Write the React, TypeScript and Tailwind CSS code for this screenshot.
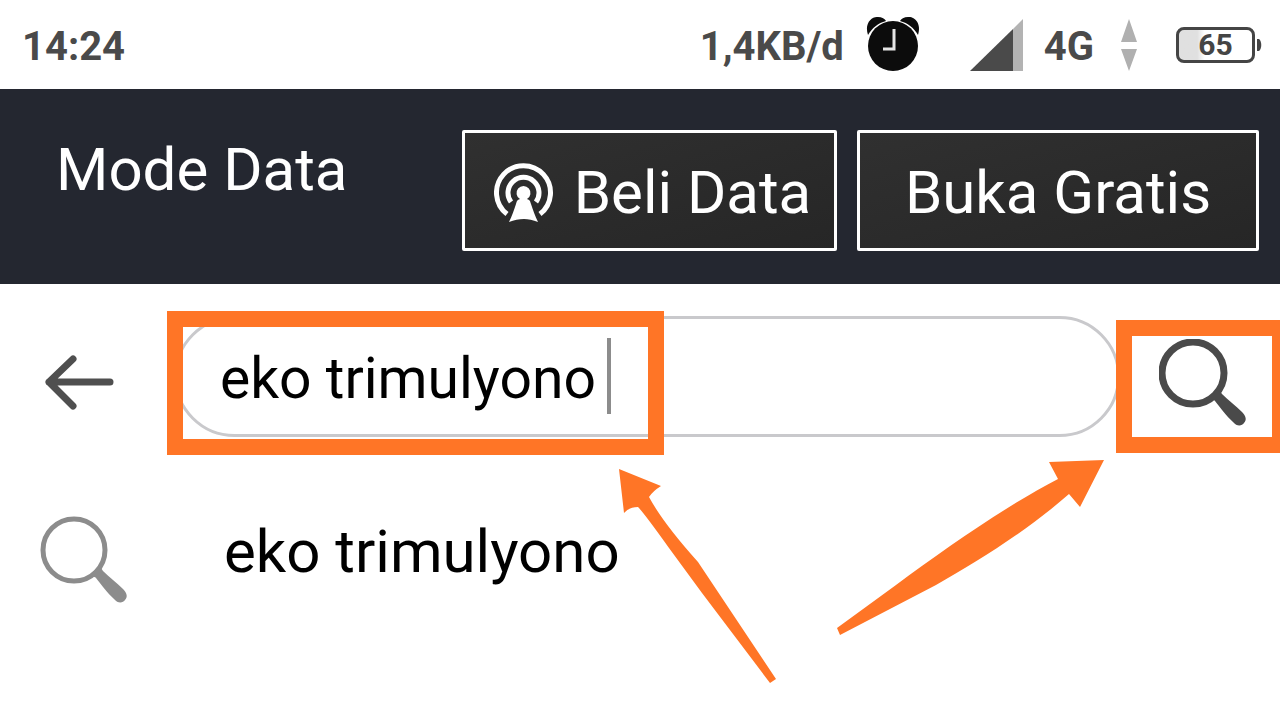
import React, { useState } from 'react';

interface SearchIconProps {
  strokeWidth: number;
  className?: string;
}

const SearchIcon: React.FC<SearchIconProps> = ({ strokeWidth, className }) => (
  <svg viewBox="0 0 88 88" fill="none" className={className} aria-hidden="true">
    <circle cx="34" cy="34" r="31" stroke="currentColor" strokeWidth={strokeWidth} />
    <path
      d="M47 62 C51 60 54 60 56 62 C61 68 67 77 74 83 C78 88 83 87 85 84 C88 81 87 77 83 73 C77 67 69 61 63 55 C61 53 61 50 62 47 Z"
      fill="currentColor"
    />
  </svg>
);

const AlarmIcon: React.FC = () => (
  <svg viewBox="0 0 56 58" className="h-[58px] w-14" aria-hidden="true">
    <path d="M2 19 C-2 7 6 0 12 1 C16 1 19 3 20 5 C12 7 6 12 2 19 Z" fill="#0c0c0c" />
    <path d="M52 19 C56 7 48 0 42 1 C38 1 35 3 34 5 C42 7 48 12 52 19 Z" fill="#0c0c0c" />
    <circle cx="27" cy="30" r="25" fill="#0c0c0c" />
    <path d="M28 13 V33 H17" fill="none" stroke="#e5e5e5" strokeWidth="3" />
  </svg>
);

const SignalIcon: React.FC = () => (
  <svg viewBox="0 0 54 54" className="size-[54px]" aria-hidden="true">
    <path d="M0 53 L43 11 V53 Z" fill="#4a4a4a" />
    <path d="M43 11 L53 1 V53 H43 Z" fill="#b3b3b3" />
  </svg>
);

const TrafficIcon: React.FC = () => (
  <svg viewBox="0 0 18 54" className="h-[54px] w-[18px]" aria-hidden="true">
    <path d="M9 1 L17 24 H1 Z M1 31 H17 L9 53 Z" fill="#b0b0b0" />
  </svg>
);

const Battery: React.FC<{ level: number }> = ({ level }) => (
  <div className="flex items-center">
    <div className="flex h-[36px] w-[79px] items-center justify-center rounded-lg border-3 border-[#454545] bg-linear-to-r from-[#e0e0e0] from-25% to-white to-35% text-[30px] leading-none font-bold text-[#454545]">
      {level}
    </div>
    <svg viewBox="0 0 6 14" className="ml-0.5 h-3.5 w-1.5" aria-hidden="true">
      <path d="M0 1 H2 C5 3 5 11 2 13 H0 Z" fill="#454545" />
    </svg>
  </div>
);

const BroadcastIcon: React.FC = () => (
  <svg viewBox="0 0 60 60" fill="none" className="size-[60px]" aria-hidden="true">
    <path d="M13 51 A27 27 0 1 1 46 51" stroke="white" strokeWidth="5" />
    <path d="M17 39 A15.5 15.5 0 1 1 42 39" stroke="white" strokeWidth="5" />
    <path
      d="M26 36 A7 7 0 1 1 33 36 C36 37 36 38 37 41 C39 47 41 53 44 59 C39 57 34 56 30 56 C25 56 20 57 15 59 C18 53 20 47 22 41 C23 38 23 37 26 36 Z"
      fill="white"
    />
  </svg>
);

const StatusBar: React.FC = () => (
  <div className="flex h-[89px] items-center justify-between pr-[17px] pl-[22px] text-[40px] leading-none font-bold text-[#4a4a4a]">
    <span className="pt-1">14:24</span>
    <div className="flex items-center">
      <span className="mr-[22px] pt-1">1,4KB/d</span>
      <AlarmIcon />
      <span className="ml-12">
        <SignalIcon />
      </span>
      <span className="mr-[26px] ml-5 pt-1">4G</span>
      <TrafficIcon />
      <span className="ml-[38px]">
        <Battery level={65} />
      </span>
    </div>
  </div>
);

const buttonClass =
  'flex h-[121px] items-center justify-center gap-5 rounded-xs border-3 border-white bg-linear-to-br from-[#303030] to-[#262626] pt-1 whitespace-nowrap';

const DataModeBar: React.FC = () => (
  <header className="flex h-[195px] items-start justify-between bg-[#242730] pt-[41px] pr-[21px] pl-14 text-[60px] leading-none text-white">
    <h1 className="pt-2.5">Mode Data</h1>
    <div className="flex gap-5">
      <button type="button" className={`${buttonClass} w-[375px] pl-1.5`}>
        <BroadcastIcon />
        Beli Data
      </button>
      <button type="button" className={`${buttonClass} w-[402px]`}>
        Buka Gratis
      </button>
    </div>
  </header>
);

export default function App() {
  const [query, setQuery] = useState('eko trimulyono');

  return (
    <div className="min-h-screen overflow-hidden bg-white font-['Roboto','Liberation_Sans',sans-serif]">
      <StatusBar />
      <DataModeBar />

      <main className="relative pt-8">
        <form className="flex h-[153px] pb-8" onSubmit={(e) => e.preventDefault()}>
          <button type="button" aria-label="Back" className="ml-11 pt-3 text-[#4f4f4f]">
            <svg viewBox="0 0 70 56" fill="none" className="h-14 w-[70px]" aria-hidden="true">
              <path
                d="M66 27 H5 M29 4 L5 27 L29 51"
                stroke="currentColor"
                strokeWidth="7"
                strokeLinecap="round"
                strokeLinejoin="round"
              />
            </svg>
          </button>

          <div className="relative ml-[60px] flex-1">
            <input
              type="text"
              aria-label="Search"
              value={query}
              onChange={(e) => setQuery(e.target.value)}
              className="h-full w-full rounded-full border-3 border-[#c9c9cc] pt-1 pl-[43px] text-[57px] text-black outline-none"
            />
            <span className="absolute top-[22px] left-[433px] h-[76px] w-[4px] bg-[#8c8c8c]" />
            <div className="pointer-events-none absolute -top-[5px] -left-[7px] h-36 w-[497px] border-16 border-[#ff7526]" />
          </div>

          <button type="submit" aria-label="Search" className="relative w-40 pt-3 pl-[39px] text-[#4a4a4a]">
            <SearchIcon strokeWidth={7} className="size-[88px]" />
            <span className="pointer-events-none absolute top-1 -right-2 -left-1 h-[133px] border-16 border-[#ff7526]" />
          </button>
        </form>

        <ul className="pt-[47px]">
          <li>
            <button type="button" className="flex w-full items-start gap-24 pl-10 text-left">
              <SearchIcon strokeWidth={5} className="size-[88px] text-[#8c8c8c]" />
              <span className="pt-1.5 text-[60px] leading-none text-black">eko trimulyono</span>
            </button>
          </li>
        </ul>

        {/* pointers to the query text and the search button */}
        <svg
          viewBox="0 0 160 216"
          className="pointer-events-none absolute top-[184px] left-[618px] h-[216px] w-40"
          aria-hidden="true"
        >
          <path
            d="M1 1 L43 18 Q35 23 31 29 Q45 55 80 94 L158 211 L152 215 L84 125 L51 80 Q26 45 20 39 Q11 39 6 45 Z"
            fill="#ff7526"
          />
        </svg>
        <svg
          viewBox="0 0 268 176"
          className="pointer-events-none absolute top-[175px] right-[176px] h-44 w-[268px]"
          aria-hidden="true"
        >
          <path
            d="M268 1 L213 3 L222 20 C170 47 110 89 60 126 L1 169 L4 176 L100 126 C140 103 190 73 233 35 L244 48 Z"
            fill="#ff7526"
          />
        </svg>
      </main>
    </div>
  );
}
